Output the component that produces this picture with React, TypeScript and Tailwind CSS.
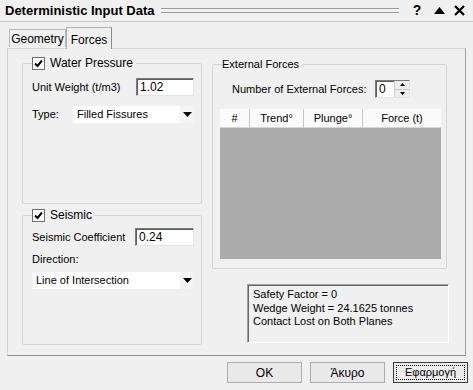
import React from 'react';

const font = "font-['Liberation_Sans',Arial,sans-serif]";

const CheckBox = () => (
  <div className="w-[13px] h-[13px] bg-white border border-[#6f6f6f] flex items-center justify-center">
    <svg width="9" height="9" viewBox="0 0 9 9">
      <path d="M1 4.5 L3.5 7 L8 1.5" stroke="#000" strokeWidth="2" fill="none" />
    </svg>
  </div>
);

const GroupBox: React.FC<{
  legend: React.ReactNode;
  className?: string;
  children?: React.ReactNode;
}> = ({ legend, className, children }) => (
  <div className={`relative border border-[#d5d5d5] rounded-[2px] ${className ?? ''}`}>
    <div className="absolute -top-[8px] left-[9px] h-[14px] bg-[#f0f0f0] flex items-center gap-[5px] pr-[3px] whitespace-nowrap">
      {legend}
    </div>
    {children}
  </div>
);

const TextInput: React.FC<{ value: string; className?: string }> = ({ value, className }) => (
  <div
    className={`h-[18px] bg-white border border-t-[#7a7a7a] border-l-[#7a7a7a] border-b-[#e3e3e3] border-r-[#e3e3e3] shadow-[inset_1px_1px_0_#5e5e5e] pl-[3px] flex items-center text-[12px] ${className ?? ''}`}
  >
    {value}
  </div>
);

const Arrow = () => (
  <svg width="9" height="5" viewBox="0 0 9 5">
    <path d="M0 0 H9 L4.5 5 Z" fill="#000" />
  </svg>
);

const Select: React.FC<{ value: string; className?: string }> = ({ value, className }) => (
  <div className={`h-[17px] bg-white flex items-center ${className ?? ''}`}>
    <span className="flex-1 pl-[4px]">{value}</span>
    <div className="w-[14px] h-full bg-[#f4f4f4] flex items-center justify-center">
      <Arrow />
    </div>
  </div>
);

const Button: React.FC<{ label: string; focused?: boolean }> = ({ label, focused }) => (
  <div
    className={`w-[75px] h-[21px] flex items-center justify-center ${
      focused
        ? 'border border-[#3c3c3c] bg-[#ececec]'
        : 'border border-[#adadad] bg-[#e9e9e9]'
    }`}
  >
    {focused ? (
      <span className="w-[69px] h-[15px] border border-dotted border-[#000] flex items-center justify-center text-[11px] whitespace-nowrap">
        {label}
      </span>
    ) : (
      <span>{label}</span>
    )}
  </div>
);

export default function App() {
  return (
    <div className={`w-[473px] h-[390px] bg-[#f0f0f0] text-[11px] text-black overflow-hidden flex flex-col ${font}`}>
      {/* Title bar */}
      <div className="h-[22px] flex items-center pl-[5px] pr-[6px] border-b border-[#c8c8c8]">
        <span className="font-bold text-[13px]">Deterministic Input Data</span>
        <div className="flex-1 ml-[6px] mr-[10px] h-[5px] border-t border-b border-[#9a9a9a]" />
        <span className="font-bold text-[14px] w-[16px] text-center">?</span>
        <span className="ml-[6px] w-[16px] flex justify-center">
          <svg width="11" height="7" viewBox="0 0 11 7">
            <path d="M0 7 L5.5 0 L11 7 Z" fill="#000" />
          </svg>
        </span>
        <span className="ml-[4px] w-[16px] flex justify-center">
          <svg width="11" height="11" viewBox="0 0 11 11">
            <path d="M1 1 L10 10 M10 1 L1 10" stroke="#000" strokeWidth="2.2" />
          </svg>
        </span>
      </div>

      {/* Tabs */}
      <div className="h-[26px] flex items-end pl-[9px] relative z-10 text-[12px]">
        <div className="h-[18px] w-[57px] mb-px border border-b-0 border-[#b9b9b9] bg-[#f0f0f0] flex items-center justify-center">
          Geometry
        </div>
        <div className="h-[22px] w-[46px] -mb-px border border-b-0 border-[#b0b0b0] border-r-[#8a8a8a] bg-[#f0f0f0] flex items-start justify-center pt-[3px]">
          Forces
        </div>
      </div>

      {/* Tab panel */}
      <div className="mx-[7px] h-[308px] border border-[#d3d3d3] border-r-[#9c9c9c] border-b-[#8c8c8c] flex pl-[14px] pt-[14px] gap-[10px]">
        {/* Left column */}
        <div className="w-[180px] flex flex-col gap-[11px]">
          <GroupBox
            className="h-[141px] pt-[14px] pl-[9px] pr-[7px]"
            legend={
              <>
                <CheckBox />
                <span className="text-[12px]">Water Pressure</span>
              </>
            }
          >
            <div className="flex items-center justify-between">
              <span>Unit Weight (t/m3)</span>
              <TextInput value="1.02" className="w-[58px]" />
            </div>
            <div className="flex items-center mt-[10px]">
              <span className="w-[41px]">Type:</span>
              <Select value="Filled Fissures" className="flex-1" />
            </div>
          </GroupBox>

          <GroupBox
            className="h-[130px] pt-[12px] pl-[9px] pr-[7px]"
            legend={
              <>
                <CheckBox />
                <span className="text-[12px]">Seismic</span>
              </>
            }
          >
            <div className="flex items-center justify-between">
              <span>Seismic Coefficient</span>
              <TextInput value="0.24" className="w-[59px]" />
            </div>
            <div className="mt-[5px] h-[16px] flex items-center">Direction:</div>
            <Select value="Line of Intersection" className="mt-[5px]" />
          </GroupBox>
        </div>

        {/* Right column */}
        <div className="w-[237px] pt-px flex flex-col">
          <GroupBox
            className="w-[235px] h-[205px] pt-[15px] px-[7px]"
            legend={<span>External Forces</span>}
          >
            <div className="flex items-center h-[18px]">
              <span className="ml-[12px] whitespace-nowrap">Number of External Forces:</span>
              <div className="ml-auto mr-[29px] w-[35px] h-[18px] bg-white border border-t-[#7a7a7a] border-l-[#7a7a7a] border-b-[#e3e3e3] border-r-[#e3e3e3] shadow-[inset_1px_1px_0_#5e5e5e] flex text-[12px]">
                <span className="flex-1 pl-[3px] leading-[16px]">0</span>
                <div className="w-[15px] flex flex-col bg-[#ededed] border-l border-[#cfcfcf]">
                  <div className="flex-1 flex items-center justify-center border-b border-[#c8c8c8]">
                    <svg width="5" height="3" viewBox="0 0 5 3">
                      <path d="M0 3 L2.5 0 L5 3 Z" fill="#000" />
                    </svg>
                  </div>
                  <div className="flex-1 flex items-center justify-center">
                    <svg width="5" height="3" viewBox="0 0 5 3">
                      <path d="M0 0 H5 L2.5 3 Z" fill="#000" />
                    </svg>
                  </div>
                </div>
              </div>
            </div>

            <div className="mt-[11px] w-[221px] flex flex-col">
              <div className="h-[19px] flex bg-[#fbfbfb] border-b border-[#d5d5d5]">
                <div className="w-[30px] flex items-center justify-center border-r border-[#c5c5c5]">#</div>
                <div className="w-[54px] flex items-center justify-center border-r border-[#c5c5c5]">Trend°</div>
                <div className="w-[59px] flex items-center justify-center border-r border-[#c5c5c5]">Plunge°</div>
                <div className="flex-1 flex items-center justify-center">Force (t)</div>
              </div>
              <div className="h-[131px] bg-[#ababab]" />
            </div>
          </GroupBox>

          <div className="mt-[15px] ml-[35px] w-[202px] h-[59px] border border-t-[#a0a0a0] border-l-[#a0a0a0] border-b-[#ffffff] border-r-[#ffffff] shadow-[inset_1px_1px_0_#696969] pl-[5px] pt-[3px] leading-[13.5px]">
            <div>Safety Factor = 0</div>
            <div>Wedge Weight = 24.1625 tonnes</div>
            <div>Contact Lost on Both Planes</div>
          </div>
        </div>
      </div>

      {/* Buttons */}
      <div className="flex justify-end gap-[8px] pr-[5px] pt-[6px] text-[12px]">
        <Button label="OK" />
        <Button label="Άκυρο" />
        <Button label="Εφαρμογή" focused />
      </div>
    </div>
  );
}
